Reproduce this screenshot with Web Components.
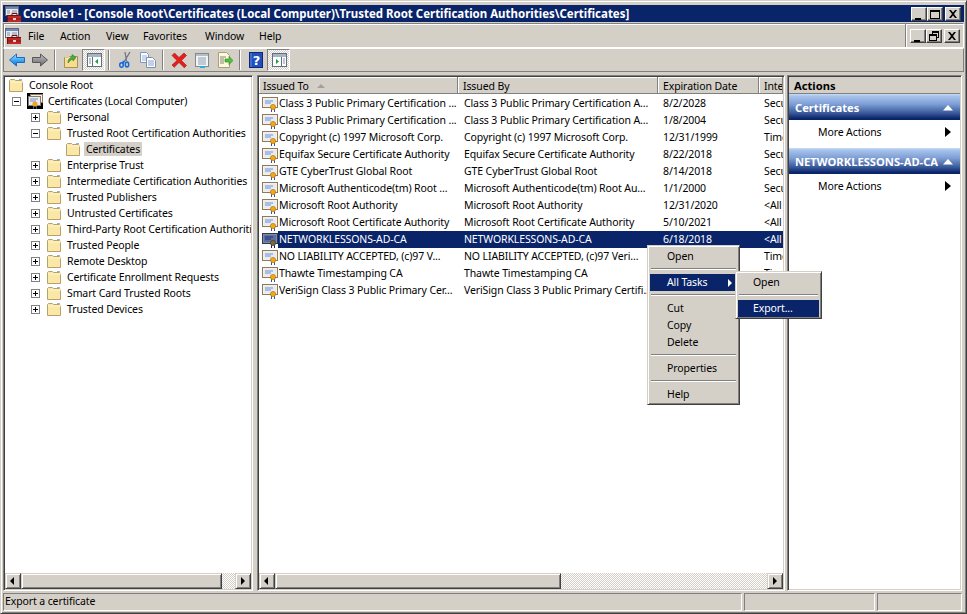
<!DOCTYPE html>
<html>
<head>
<meta charset="utf-8">
<title>Console1</title>
<style>
html, body { margin: 0; padding: 0; background: #d4d0c8; }
body { width: 967px; height: 614px; overflow: hidden; font: 10.5px "Noto Sans", "DejaVu Sans", sans-serif; letter-spacing: -.11px; color: #000; }
</style>
</head>
<body>
<mmc-window>
  <mmc-titlebar slot="title">Console1 - [Console Root\Certificates (Local Computer)\Trusted Root Certification Authorities\Certificates]</mmc-titlebar>
  <mmc-menubar slot="menu">
    <mmc-menu-item style="width:32px">File</mmc-menu-item>
    <mmc-menu-item style="width:46px">Action</mmc-menu-item>
    <mmc-menu-item style="width:37px">View</mmc-menu-item>
    <mmc-menu-item style="width:62px">Favorites</mmc-menu-item>
    <mmc-menu-item style="width:54px">Window</mmc-menu-item>
    <mmc-menu-item style="width:40px">Help</mmc-menu-item>
  </mmc-menubar>
  <mmc-toolbar slot="tools"></mmc-toolbar>
  <mmc-tree slot="tree"></mmc-tree>
  <mmc-list slot="list"></mmc-list>
  <mmc-actions slot="actions"></mmc-actions>
  <mmc-status slot="status">Export a certificate</mmc-status>
  <mmc-popup slot="popup" style="left:646px;top:244px;width:93px" items="Open|-|*All Tasks>|-|Cut|Copy|Delete|-|Properties|-|Help" pad="20"></mmc-popup>
  <mmc-popup slot="popup" style="left:734px;top:270px;width:87px" items="Open|-|*Export..." pad="18"></mmc-popup>
</mmc-window>

<script>
// all icons are 16x16 unless the viewBox says otherwise
const ICONS = {
  cert: `<rect x=".5" y="1.5" width="15" height="10" fill="#f6f1e4" stroke="#8c7a5a"/><rect x="2" y="3" width="12" height="7" fill="#e6ebf6"/><path d="M3 5h8M3 7h6" stroke="#6f8fd0"/><path d="M9 12h1v4H9zM12 12h1v4h-1z" fill="#2a50c0"/><circle cx="11" cy="11" r="2.6" fill="#f0a818" stroke="#b87808" stroke-width=".7"/>`,
  certsel: `<rect x=".5" y="1.500" width="15" height="10" fill="#7f88a8" stroke="#33384e"/><rect x="2" y="3" width="12" height="7" fill="#5f6e9c"/><path d="M3 5h8M3 7h6" stroke="#1c3078"/><path d="M9 12h1v4H9zM12 12h1v4h-1z" fill="#0a246a"/><circle cx="11" cy="11" r="2.600" fill="#7a6a40" stroke="#4a3c30" stroke-width=".7"/>`,
  store: `<rect x="0" y="0" width="16" height="16" fill="#000"/><rect x="3.5" y="1.5" width="12" height="8" fill="#f6f1e4" stroke="#8c7a5a"/><rect x="1.5" y="3.5" width="12" height="9" fill="#e6ebf6" stroke="#8c7a5a"/><path d="M3 6h8M3 8h6" stroke="#6f8fd0"/><path d="M6 12h1v4H6zM9 12h1v4H9z" fill="#2a50c0"/><circle cx="8" cy="11" r="2.6" fill="#f0a818"/>`,
  folder: `<path d="M1.5 14.5v-11l1-1h4l1 1h6l1 1v10z" fill="#fbe8a6" stroke="#b6a06c"/><path d="M2 5h13" stroke="#fff6d4"/><path d="M11 2h3v1h-3z" fill="#8fb4e8"/>`,
  app: `<rect x=".5" y=".5" width="13" height="9" fill="#e8e8f0" stroke="#606878"/><path d="M1 2h12" stroke="#7088b8" stroke-width="2"/><path d="M2 5h3M7 5h5M2 7h3M7 7h5" stroke="#8090a0"/><rect x="2.5" y="9.5" width="14" height="7" fill="#c02828" stroke="#701010"/><path d="M7 9V7.5h5V9" fill="none" stroke="#701010"/><path d="M3 13h13" stroke="#801818"/><path d="M8 12h3v2H8z" fill="#f0d0c0"/>`,
  back: `<defs><linearGradient id="b" x1="0" y1="0" x2="0" y2="1"><stop offset="0" stop-color="#a8e0ff"/><stop offset=".6" stop-color="#30a0f0"/><stop offset="1" stop-color="#1068d8"/></linearGradient></defs><path d="M.5 8 7.500 2v3.500h8v5h-8V14z" fill="url(#b)" stroke="#1c6cc0"/>`,
  forward: `<defs><linearGradient id="f" x1="0" y1="0" x2="0" y2="1"><stop offset="0" stop-color="#c0c0c0"/><stop offset="1" stop-color="#686868"/></linearGradient></defs><path d="M15.500 8 8.500 2v3.500h-8v5h8V14z" fill="url(#f)" stroke="#585858"/>`,
  up: `<path d="M1.500 15.500v-10h4l1-1h8v11z" fill="#f8dc90" stroke="#a89058"/><path d="M2 6h12" stroke="#fff2c8"/><path d="M5 11c0-3 1-5 4-6V2.500l4 3-3 3.500V7c-2 .5-3 2-5 4z" fill="#48b038" stroke="#2a7a1c" stroke-width=".6"/>`,
  panelLeft: `<rect x="1.500" y="1.500" width="14" height="13" fill="#fff" stroke="#607080"/><rect x="2" y="2" width="13" height="3" fill="#a8b4c4"/><path d="M6.500 5v9" stroke="#607080"/><path d="M3 7h2M3 9h2M3 11h2" stroke="#8090a8"/><path d="M12 7v5L9 9.500z" fill="#18a040"/>`,
  panelRight: `<rect x="1.500" y="1.500" width="14" height="13" fill="#fff" stroke="#607080"/><rect x="2" y="2" width="13" height="3" fill="#a8b4c4"/><path d="M10.500 5v9" stroke="#607080"/><path d="M12 7h2M12 9h2M12 11h2" stroke="#8090a8"/><path d="M5 7v5l3-2.500z" fill="#18a040"/>`,
  cut: `<path d="M13 0 7 10M8 0l1.500 9" stroke="#70788a" stroke-width="1.300" fill="none"/><path d="M7 9 5.500 11.500" stroke="#1868d8" stroke-width="2"/><ellipse cx="4.500" cy="13" rx="1.800" ry="2.300" fill="none" stroke="#1868d8" stroke-width="1.500"/><ellipse cx="10" cy="12.500" rx="1.700" ry="2.500" fill="none" stroke="#1868d8" stroke-width="1.500"/>`,
  copy: `<path d="M.5 .5h6l2 2v8h-8z" fill="#f8fbff" stroke="#8098c0"/><path d="M2 4h5M2 6h5M2 8h5" stroke="#a0b4d4"/><path d="M6.500 5.500h6l3 3v7h-9z" fill="#fff" stroke="#7890b8"/><path d="M8 9h6M8 11h6M8 13h6" stroke="#88a0c8"/>`,
  del: `<path d="M1 3.500 3.500 1l4.500 4.500L13 1l2.500 2.500-5 5 5 5L13 16l-5-5-4.500 4.500L1 13l5-4.500z" fill="#e4201c" stroke="#a01414" stroke-width=".6"/><path d="M3.500 15.500 8 11l5 5" fill="none" stroke="#a0a0a0"/>`,
  props: `<rect x="1.500" y="1.500" width="13" height="13" fill="#f4f4f0" stroke="#808890"/><rect x="2" y="2" width="12" height="2" fill="#b8bec8"/><path d="M4 6h8M4 8h8M4 10h8M4 12h8" stroke="#8ca0b8"/><path d="M6 15h5" stroke="#30a8e8" stroke-width="2"/>`,
  exportList: `<path d="M1.500 .5h8l3 3v12h-11z" fill="#fff8dc" stroke="#a8a078"/><path d="M3 5h6M3 7h4M3 9h4M3 11h4" stroke="#808878"/><path d="M8 7h4V4.500l4 4-4 4V10H8z" fill="#50c040" stroke="#288018" stroke-width=".6"/>`,
  help: `<rect x="1.500" y=".5" width="13" height="15" fill="#2050c0" stroke="#102870"/><path d="M3 1v14" stroke="#6088e0"/><text x="8.500" y="13" font-size="13" font-weight="700" font-family="DejaVu Sans" text-anchor="middle" fill="#fff">?</text>`
};

class BaseElement extends HTMLElement {
  constructor() {
    super();
    this.attachShadow({ mode: 'open' });
  }
  render(html) {
    this.shadowRoot.innerHTML = html;
  }
}

class MmcIcon extends BaseElement {
  connectedCallback() {
    const size = this.getAttribute('size') || 16;
    this.render(`<style>:host{display:inline-block;width:${size}px;height:${size}px;flex:none}svg{display:block}</style>
      <svg width="${size}" height="${size}" viewBox="0 0 16 16">${ICONS[this.getAttribute('name')]}</svg>`);
  }
}

class MmcWindow extends BaseElement {
  connectedCallback() {
    this.render(`<style>
      :host{display:block;position:relative;box-sizing:border-box;width:967px;height:614px;background:#d4d0c8;
        border:1px solid;border-color:#d4d0c8 #404040 #404040 #d4d0c8;box-shadow:inset 1px 1px #fff,inset -1px -1px #808080}
      .wrap{box-sizing:border-box;height:100%;padding:4px 2px 2px 2px;display:flex;flex-direction:column}
      .panes{flex:1;min-height:0;display:flex;gap:3px;margin:3px 0 2px}
      .gap{height:1px}
    </style>
    <div class="wrap">
      <slot name="title"></slot><div class="gap"></div>
      <slot name="menu"></slot>
      <slot name="tools"></slot>
      <div class="panes"><slot name="tree"></slot><slot name="list"></slot><slot name="actions"></slot></div>
      <slot name="status"></slot>
    </div>
    <slot name="popup"></slot>`);
  }
}

class MmcCaptionButton extends BaseElement {
  connectedCallback() {
    const glyphs = {
      min: '<path d="M3 10h6v2H3z"/>',
      max: '<path d="M2 2h10v9H2zM3 4v6h8V4z" fill-rule="evenodd"/>',
      restore: '<path d="M5 1h7v7h-2v3H2V4h3zM6 3v1h4v3h1V3zM3 6v4h6V6z" fill-rule="evenodd"/>',
      close: '<path d="M3 2h2l2 2.500L9 2h2L8 6l3 4H9L7 7.500 5 10H3l3-4z"/>'
    };
    this.render(`<style>
      :host{display:block;box-sizing:border-box;width:16px;height:14px;background:#d4d0c8;
        border:1px solid;border-color:#fff #404040 #404040 #fff;box-shadow:inset -1px -1px #808080}
      svg{display:block}
    </style><svg width="14" height="12" viewBox="0 0 14 12">${glyphs[this.getAttribute('kind')]}</svg>`);
  }
}

class MmcTitlebar extends BaseElement {
  connectedCallback() {
    this.render(`<style>
      :host{display:flex;align-items:center;height:17px;background:#0a246a;color:#fff;font-weight:700;font-size:11.48px;letter-spacing:0;white-space:nowrap;flex:none}
      mmc-icon{margin:0 2px 0 2px}
      .text{flex:1}
      .btns{display:flex;margin-right:3px}
      mmc-caption-button:nth-child(2){margin-right:2px}
    </style>
    <mmc-icon name="app"></mmc-icon><span class="text"><slot></slot></span>
    <span class="btns"><mmc-caption-button kind="min"></mmc-caption-button><mmc-caption-button kind="max"></mmc-caption-button><mmc-caption-button kind="close"></mmc-caption-button></span>`);
  }
}

class MmcMenuItem extends BaseElement {
  connectedCallback() {
    this.render(`<style>:host{display:block;flex:none;white-space:nowrap}</style><slot></slot>`);
  }
}

class MmcMenubar extends BaseElement {
  connectedCallback() {
    this.render(`<style>
      :host{display:flex;align-items:center;box-sizing:border-box;height:25px;flex:none;
        border:1px solid;border-color:#808080 #fff #fff #808080;box-shadow:inset 1px 1px #fff}
      mmc-icon{margin-left:1px;margin-right:7px}
      .items{flex:1;display:flex}
      .mdi{align-self:stretch;display:flex;align-items:center;padding-left:3px;border-left:1px solid #fff;box-shadow:-1px 0 #808080;margin-right:3px}
      mmc-caption-button:nth-child(2){margin-right:2px}
    </style>
    <mmc-icon name="app"></mmc-icon><div class="items"><slot></slot></div>
    <div class="mdi"><mmc-caption-button kind="min"></mmc-caption-button><mmc-caption-button kind="restore"></mmc-caption-button><mmc-caption-button kind="close"></mmc-caption-button></div>`);
  }
}

class MmcToolbar extends BaseElement {
  connectedCallback() {
    const tools = ['back','forward','|','up','panelLeft!','|','cut','copy','|','del','props','exportList','|','help','panelRight!'];
    const html = tools.map(t => {
      if (t === '|') return '<i class="sep"></i>';
      const pressed = t.endsWith('!');
      return `<span class="tool${pressed ? ' on' : ''}"><mmc-icon name="${t.replace('!', '')}"></mmc-icon></span>`;
    }).join('');
    this.render(`<style>
      :host{display:flex;align-items:center;box-sizing:border-box;height:24px;flex:none;padding-left:1px;
        border-top:1px solid #fff;border-bottom:1px solid #808080;border-right:1px solid #808080;border-left:1px solid #808080}
      .tool{box-sizing:border-box;width:23px;height:22px;display:flex;align-items:center;justify-content:center;flex:none}
      .on{background:repeating-conic-gradient(#d4d0c8 0 25%,#fff 0 50%) 0 0/2px 2px;border:1px solid;border-color:#808080 #fff #fff #808080}
      .sep{display:block;box-sizing:border-box;width:8px;height:20px;flex:none}
      .sep::after{content:"";display:block;width:1px;height:20px;background:#808080;box-shadow:1px 0 #fff;margin-left:3px}
    </style>${html}`);
  }
}

class MmcScrollbar extends BaseElement {
  connectedCallback() {
    const arrow = dir => `<svg width="14" height="14" viewBox="0 0 14 14"><path d="${dir === 'l' ? 'M8 3v8L4 7z' : 'M5 3v8l4-4z'}"/></svg>`;
    this.render(`<style>
      :host{display:flex;height:16px;flex:none}
      .b,.t{box-sizing:border-box;height:16px;background:#d4d0c8;border:1px solid;border-color:#d4d0c8 #404040 #404040 #d4d0c8;box-shadow:inset 1px 1px #fff,inset -1px -1px #808080}
      .b{width:16px;flex:none}
      .t{width:${this.getAttribute('thumb')}px;flex:none}
      .tr{flex:1;background:repeating-conic-gradient(#d4d0c8 0 25%,#fff 0 50%) 0 0/2px 2px}
      svg{display:block}
    </style><div class="b">${arrow('l')}</div><div class="t"></div><div class="tr"></div><div class="b">${arrow('r')}</div>`);
  }
}

class MmcTreeRow extends BaseElement {
  connectedCallback() {
    const level = +this.getAttribute('level');
    const exp = this.getAttribute('exp');
    const indent = exp ? 7 + 19 * (level - 1) : 3 + 19 * level;
    const box = exp ? `<svg class="exp" width="9" height="9" viewBox="0 0 9 9"><rect x=".5" y=".5" width="8" height="8" fill="#fff" stroke="#808080"/><path d="M2 4.500h5${exp === '+' ? 'M4.500 2v5' : ''}" stroke="#000"/></svg>` : '';
    const sel = this.hasAttribute('sel');
    this.render(`<style>
      :host{display:flex;align-items:center;height:16px;white-space:nowrap;padding-left:${indent}px}
      .exp{margin-right:6px;flex:none}
      mmc-icon{margin-right:3px}
      .label{padding:0 2px;line-height:14px;${sel ? 'background:#d4d0c8' : ''}}
    </style>${box}<mmc-icon name="${this.getAttribute('icon') || 'folder'}"></mmc-icon><span class="label"><slot></slot></span>`);
  }
}

class MmcTree extends BaseElement {
  connectedCallback() {
    const rows = [
      [0, '', 'Console Root'], [1, '-', 'Certificates (Local Computer)', 'store'],
      [2, '+', 'Personal'], [2, '-', 'Trusted Root Certification Authorities'], [3, '', 'Certificates', '', 1],
      [2, '+', 'Enterprise Trust'], [2, '+', 'Intermediate Certification Authorities'], [2, '+', 'Trusted Publishers'],
      [2, '+', 'Untrusted Certificates'], [2, '+', 'Third-Party Root Certification Authoriti'], [2, '+', 'Trusted People'],
      [2, '+', 'Remote Desktop'], [2, '+', 'Certificate Enrollment Requests'], [2, '+', 'Smart Card Trusted Roots'], [2, '+', 'Trusted Devices']
    ];
    this.render(`<style>
      :host{display:flex;flex-direction:column;box-sizing:border-box;width:250px;flex:none;background:#fff;
        border:1px solid;border-color:#808080 #fff #fff #808080;box-shadow:inset 1px 1px #404040,inset -1px -1px #d4d0c8;padding:1px}
      .body{flex:1;overflow:hidden}
    </style><div class="body">${rows.map(r => `<mmc-tree-row level="${r[0]}" ${r[1] ? `exp="${r[1]}"` : ''} ${r[3] ? `icon="${r[3]}"` : ''} ${r[4] ? 'sel' : ''}>${r[2]}</mmc-tree-row>`).join('')}</div>
    <mmc-scrollbar thumb="201"></mmc-scrollbar>`);
  }
}

class MmcListRow extends BaseElement {
  connectedCallback() {
    const sel = this.hasAttribute('sel');
    const esc = s => (s || '').replace(/&/g, '&amp;').replace(/</g, '&lt;');
    const cols = this.getAttribute('cols').split('|').map(esc);
    this.render(`<style>
      :host{display:flex;height:17px;align-items:center;white-space:nowrap;${sel ? 'background:linear-gradient(90deg,#fff 19px,#0a246a 19px);color:#fff' : ''}}
      mmc-icon{margin-left:3px;margin-right:1px}
      span{display:block;overflow:hidden;flex:none;height:15px;line-height:14px}
      .a{width:178px}.b{width:194px;padding-left:7px}.c{width:95px;padding-left:5px}.d{width:24px;padding-left:6px}
    </style><mmc-icon name="${sel ? 'certsel' : 'cert'}"></mmc-icon>
    <span class="a">${cols[0]}</span><span class="b">${cols[1]}</span><span class="c">${cols[2]}</span><span class="d">${cols[3]}</span>`);
  }
}

class MmcList extends BaseElement {
  connectedCallback() {
    const data = [
      'Class 3 Public Primary Certification ...|Class 3 Public Primary Certification A...|8/2/2028|Secu',
      'Class 3 Public Primary Certification ...|Class 3 Public Primary Certification A...|1/8/2004|Secu',
      'Copyright (c) 1997 Microsoft Corp.|Copyright (c) 1997 Microsoft Corp.|12/31/1999|Time',
      'Equifax Secure Certificate Authority|Equifax Secure Certificate Authority|8/22/2018|Secu',
      'GTE CyberTrust Global Root|GTE CyberTrust Global Root|8/14/2018|Secu',
      'Microsoft Authenticode(tm) Root ...|Microsoft Authenticode(tm) Root Au...|1/1/2000|Secu',
      'Microsoft Root Authority|Microsoft Root Authority|12/31/2020|<All',
      'Microsoft Root Certificate Authority|Microsoft Root Certificate Authority|5/10/2021|<All',
      '*NETWORKLESSONS-AD-CA|NETWORKLESSONS-AD-CA|6/18/2018|<All',
      'NO LIABILITY ACCEPTED, (c)97 V...|NO LIABILITY ACCEPTED, (c)97 Veri...||Time',
      'Thawte Timestamping CA|Thawte Timestamping CA||Time',
      'VeriSign Class 3 Public Primary Cer...|VeriSign Class 3 Public Primary Certifi...||'
    ];
    this.shadowRoot.innerHTML = `<style>
      :host{display:flex;flex-direction:column;box-sizing:border-box;width:528px;flex:none;margin-left:1px;margin-right:-1px;background:#fff;
        border:1px solid;border-color:#808080 #fff #fff #808080;box-shadow:inset 1px 1px #404040,inset -1px -1px #d4d0c8;padding:1px}
      .head{display:flex;height:17px;flex:none;background:#d4d0c8}
      .head div{box-sizing:border-box;height:17px;padding:2px 0 0 5px;border-right:1px solid #808080;box-shadow:inset 1px 1px #fff,inset -1px -1px #d4d0c8;border-bottom:1px solid #808080;white-space:nowrap;overflow:hidden;flex:none;line-height:14px}
      .head div:first-child{padding-left:4px}
      .arrow{display:inline-block;width:0;height:0;border:4px solid transparent;border-top:0;border-bottom:4px solid #a0a0a0;margin-left:8px;vertical-align:2px}
      .body{flex:1;padding-top:1px;overflow:hidden}
    </style>
    <div class="head"><div style="width:199px">Issued To<i class="arrow"></i></div><div style="width:200px">Issued By</div><div style="width:101px">Expiration Date</div><div style="flex:1">Inte</div></div>
    <div class="body"></div>
    <mmc-scrollbar thumb="286"></mmc-scrollbar>`;
    const body = this.shadowRoot.querySelector('.body');
    data.forEach(d => {
      const row = document.createElement('mmc-list-row');
      if (d[0] === '*') row.setAttribute('sel', '');
      row.setAttribute('cols', d.replace('*', ''));
      body.appendChild(row);
    });
  }
}

class MmcActions extends BaseElement {
  connectedCallback() {
    const sec = t => `<div class="sec"><b>${t}</b><svg width="12" height="6" viewBox="0 0 12 6"><path d="M6 0l5 5.500H1z" fill="#fff"/></svg></div>
      <div class="more"><span>More Actions</span><svg width="8" height="10" viewBox="0 0 8 10"><path d="M1 0l6 5-6 5z"/></svg></div>`;
    this.render(`<style>
      :host{display:block;box-sizing:border-box;width:175px;flex:none;background:#fff;
        border:1px solid;border-color:#808080 #fff #fff #808080;box-shadow:inset 1px 1px #404040,inset -1px -1px #d4d0c8;padding:1px}
      .top{box-sizing:border-box;height:17px;background:#d4d0c8;font-weight:700;font-size:11.2px;letter-spacing:0;padding:1px 0 0 5px;line-height:15px;border-bottom:1px solid #808080}
      .sec{box-sizing:border-box;height:26px;display:flex;align-items:center;justify-content:space-between;padding:1px 6px 0;color:#fff;font-size:11.2px;letter-spacing:0;
        background:linear-gradient(#c8dcf4 0,#a8c4ec 8%,#7c9cd4 40%,#3c5c9c 72%,#0a246a 95%)}
      .sec b{white-space:nowrap}
      .more{box-sizing:border-box;height:28px;display:flex;align-items:center;justify-content:space-between;padding:0 8px 4px 29px}
    </style><div class="top">Actions</div>${sec('Certificates')}${sec('NETWORKLESSONS-AD-CA')}`);
  }
}

class MmcStatus extends BaseElement {
  connectedCallback() {
    this.render(`<style>
      :host{display:flex;gap:2px;height:18px;flex:none;padding-right:2px}
      div{box-sizing:border-box;height:18px;border:1px solid;border-color:#808080 #fff #fff #808080;line-height:14px;white-space:nowrap}
      .a{width:739px;padding-left:1px}.b{width:131px}.c{flex:1}
    </style><div class="a"><slot></slot></div><div class="b"></div><div class="c"></div>`);
  }
}

class MmcPopup extends BaseElement {
  connectedCallback() {
    const pad = this.getAttribute('pad');
    const html = this.getAttribute('items').split('|').map(it => {
      if (it === '-') return '<hr>';
      const hot = it[0] === '*';
      const sub = it.endsWith('>');
      const label = it.replace('*', '').replace('>', '');
      return `<div class="it${hot ? ' hot' : ''}">${label}${sub ? '<svg width="5" height="8" viewBox="0 0 5 8"><path d="M0 0l4 4-4 4z" fill="#fff"/></svg>' : ''}</div>`;
    }).join('');
    this.render(`<style>
      :host{display:block;position:absolute;box-sizing:border-box;background:#d4d0c8;padding:2px 2px 1px 2px;
        border:1px solid;border-color:#d4d0c8 #404040 #404040 #d4d0c8;box-shadow:inset 1px 1px #fff,inset -1px -1px #808080}
      .it{box-sizing:border-box;height:17px;line-height:14px;padding:0 4px 2px ${pad - 3}px;display:flex;align-items:center;justify-content:space-between;white-space:nowrap}
      .it svg{margin-top:2px}
      .hot{background:#0a246a;color:#fff}
      hr{box-sizing:border-box;height:2px;margin:3px 1px 4px;border:0;border-top:1px solid #808080;border-bottom:1px solid #fff}
    </style>${html}`);
  }
}

customElements.define('mmc-icon', MmcIcon);
customElements.define('mmc-caption-button', MmcCaptionButton);
customElements.define('mmc-titlebar', MmcTitlebar);
customElements.define('mmc-menu-item', MmcMenuItem);
customElements.define('mmc-menubar', MmcMenubar);
customElements.define('mmc-toolbar', MmcToolbar);
customElements.define('mmc-scrollbar', MmcScrollbar);
customElements.define('mmc-tree-row', MmcTreeRow);
customElements.define('mmc-tree', MmcTree);
customElements.define('mmc-list-row', MmcListRow);
customElements.define('mmc-list', MmcList);
customElements.define('mmc-actions', MmcActions);
customElements.define('mmc-status', MmcStatus);
customElements.define('mmc-popup', MmcPopup);
customElements.define('mmc-window', MmcWindow);
</script>
</body>
</html>
